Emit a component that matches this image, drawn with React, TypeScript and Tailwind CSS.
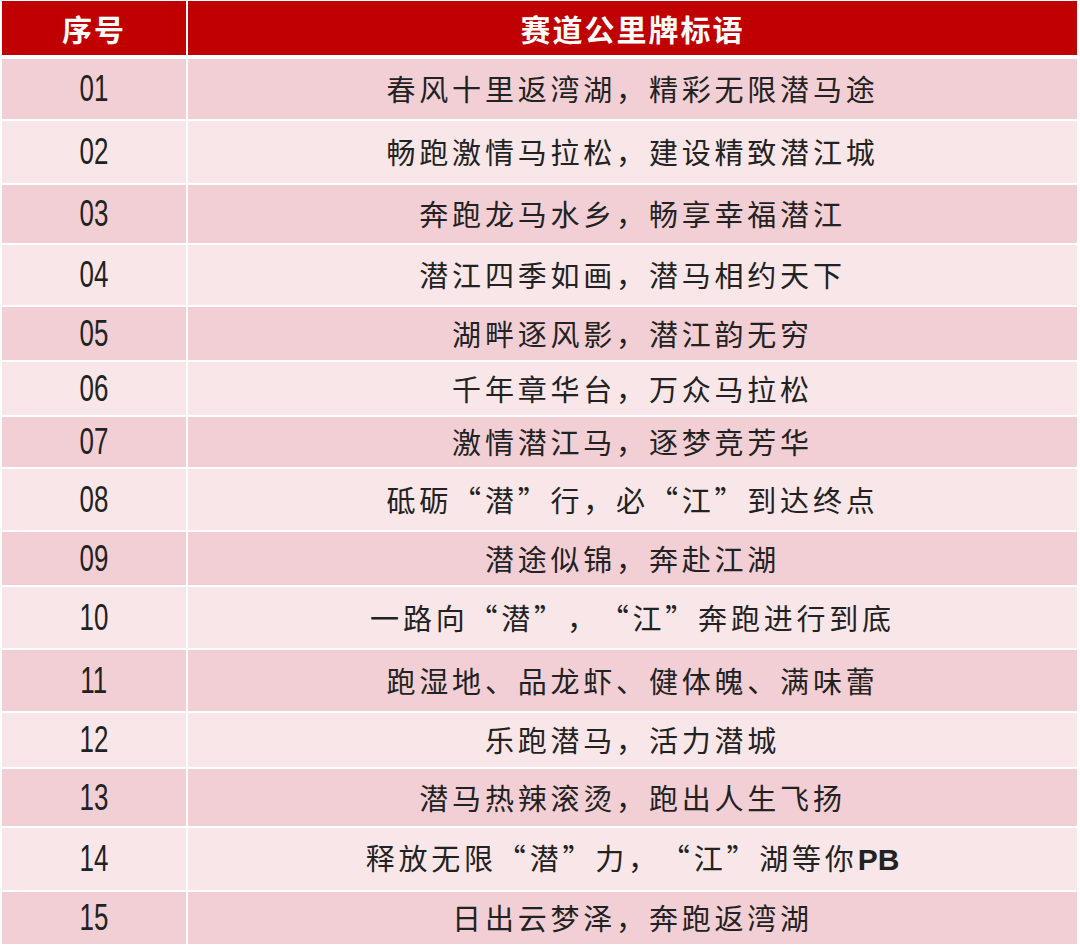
const ROWS = [
  { no: "01", text: "春风十里返湾湖，精彩无限潜马途", h: "h-[60px]", bg: "bg-[#f2cfd4]" },
  { no: "02", text: "畅跑激情马拉松，建设精致潜江城", h: "h-[62px]", bg: "bg-[#f9e6e8]" },
  { no: "03", text: "奔跑龙马水乡，畅享幸福潜江", h: "h-[58px]", bg: "bg-[#f2cfd4]" },
  { no: "04", text: "潜江四季如画，潜马相约天下", h: "h-[60px]", bg: "bg-[#f9e6e8]" },
  { no: "05", text: "湖畔逐风影，潜江韵无穷", h: "h-[53px]", bg: "bg-[#f2cfd4]" },
  { no: "06", text: "千年章华台，万众马拉松", h: "h-[53px]", bg: "bg-[#f9e6e8]" },
  { no: "07", text: "激情潜江马，逐梦竞芳华", h: "h-[50px]", bg: "bg-[#f2cfd4]" },
  { no: "08", text: "砥砺“潜”行，必“江”到达终点", h: "h-[61px]", bg: "bg-[#f9e6e8]" },
  { no: "09", text: "潜途似锦，奔赴江湖", h: "h-[53px]", bg: "bg-[#f2cfd4]" },
  { no: "10", text: "一路向“潜”，“江”奔跑进行到底", h: "h-[61px]", bg: "bg-[#f9e6e8]" },
  { no: "11", text: "跑湿地、品龙虾、健体魄、满味蕾", h: "h-[61px]", bg: "bg-[#f2cfd4]" },
  { no: "12", text: "乐跑潜马，活力潜城", h: "h-[54px]", bg: "bg-[#f9e6e8]" },
  { no: "13", text: "潜马热辣滚烫，跑出人生飞扬", h: "h-[57px]", bg: "bg-[#f2cfd4]" },
  { no: "14", text: "释放无限“潜”力，“江”湖等你", h: "h-[62px]", bg: "bg-[#f9e6e8]", tail: "PB" },
  { no: "15", text: "日出云梦泽，奔跑返湾湖", h: "h-[52px]", bg: "bg-[#f2cfd4]" },
];

const cjk = "font-['Noto_Sans_CJK_SC',sans-serif] [text-spacing-trim:space-all]";

export default function App() {
  return (
    <div className="min-h-screen w-[1080px] bg-white pl-[2px] pt-[1px]">
      <div className="flex flex-col gap-[2px]">
        <div className="mb-[2px] grid h-[54px] grid-cols-[184px_889px] gap-[2px]">
          <div className={`flex items-center justify-center bg-[#c00000] text-[30px] font-bold tracking-[2px] text-white ${cjk}`}>
            序号
          </div>
          <div className={`flex items-center justify-center bg-[#c00000] text-[30px] font-bold tracking-[2px] text-white ${cjk}`}>
            赛道公里牌标语
          </div>
        </div>
        {ROWS.map((r) => (
          <div key={r.no} className={`grid grid-cols-[184px_889px] gap-[2px] ${r.h}`}>
            <div className={`flex items-center justify-center text-[#222] ${r.bg}`}>
              <span className="inline-block scale-x-[0.72] font-['Liberation_Sans',sans-serif] text-[36px] leading-none">
                {r.no}
              </span>
            </div>
            <div className={`flex items-center justify-center text-[29px] tracking-[3.8px] text-[#222] ${r.bg} ${cjk}`}>
              <span>
                {r.text}
                {r.tail && (
                  <span className="font-['Liberation_Sans',sans-serif] text-[30px] font-bold tracking-normal">{r.tail}</span>
                )}
              </span>
            </div>
          </div>
        ))}
      </div>
    </div>
  );
}
